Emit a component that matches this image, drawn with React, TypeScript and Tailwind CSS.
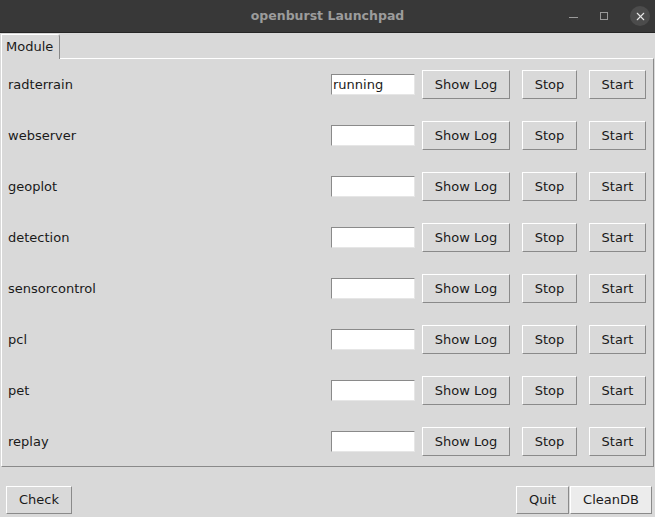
import { X } from "lucide-react";

const modules = ["radterrain", "webserver", "geoplot", "detection", "sensorcontrol", "pcl", "pet", "replay"];

const raised = "bg-[#d9d9d9] border border-t-white border-l-white border-r-[#8a8a8a] border-b-[#8a8a8a] text-[#1a1a1a] flex items-center justify-center";

export default function App() {
    return (
        <div className="w-[655px] h-[517px] bg-[#d9d9d9] flex flex-col overflow-hidden text-[13px] text-[#1a1a1a]" style={{ fontFamily: '"DejaVu Sans", sans-serif' }}>
            {/* Title bar */}
            <div className="h-[33px] bg-[#383838] border-b border-[#262626] flex items-center relative shrink-0">
                <div className="flex-1 text-center font-bold text-[12.5px] text-[#9c9c9c]">openburst Launchpad</div>
                <div className="absolute right-[5px] top-0 h-full flex items-center gap-[22px]">
                    <div className="w-[9px] h-[1px] bg-[#9a9a9a] mt-[3px]" />
                    <div className="w-[8px] h-[8px] border border-[#9a9a9a]" />
                    <div className="w-[20px] h-[20px] rounded-full bg-[#4c4c4c] flex items-center justify-center">
                        <X size={13} strokeWidth={2} className="text-[#e8e8e8]" />
                    </div>
                </div>
            </div>

            {/* Tab */}
            <div className="flex pt-[1px] pl-[1px] shrink-0">
                <div className="relative z-10 -mb-[1px] h-[25px] w-[59px] bg-[#d9d9d9] border-t border-l border-r border-t-white border-l-white border-r-[#8a8a8a] rounded-tr-[3px] pl-[4px] flex items-center">
                    Module
                </div>
            </div>

            {/* Pane */}
            <div className="mx-[1px] border border-t-white border-l-white border-r-[#8a8a8a] border-b-[#8a8a8a] pt-[11px] pb-[10px] pl-[6px] pr-[7px] flex flex-col gap-[22px]">
                {modules.map((m, i) => (
                    <div key={m} className="h-[29px] flex items-center">
                        <div className="flex-1">{m}</div>
                        <div className="w-[84px] h-[21px] bg-white border border-t-[#8a8a8a] border-l-[#8a8a8a] border-r-[#e6e6e6] border-b-[#e6e6e6] pl-[1px] leading-[19px]">
                            {i === 0 ? "running" : ""}
                        </div>
                        <div className={`${raised} ml-[7px] w-[88px] h-[29px]`}>Show Log</div>
                        <div className={`${raised} ml-[12px] w-[55px] h-[29px]`}>Stop</div>
                        <div className={`${raised} ml-[12px] w-[57px] h-[29px]`}>Start</div>
                    </div>
                ))}
            </div>

            {/* Bottom bar */}
            <div className="flex items-center pt-[19px] pl-[6px] pr-[3px]">
                <div className={`${raised} w-[66px] h-[28px]`}>Check</div>
                <div className="flex-1" />
                <div className={`${raised} w-[53px] h-[28px]`}>Quit</div>
                <div className={`${raised} ml-[1px] w-[82px] h-[28px] bg-[#ececec]`}>CleanDB</div>
            </div>
        </div>
    );
}
